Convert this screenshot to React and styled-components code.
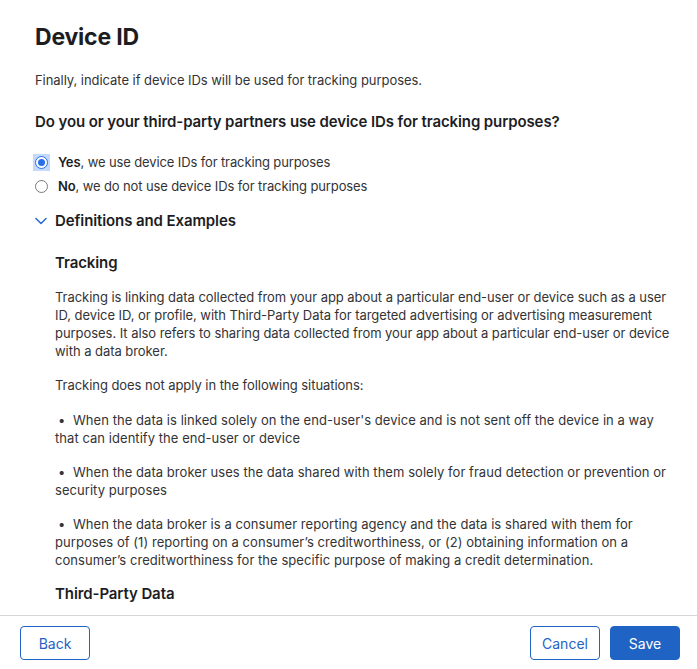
import React, { useState } from "react";
import styled, { createGlobalStyle } from "styled-components";

const GlobalStyle = createGlobalStyle`
  html, body {
    margin: 0;
    padding: 0;
    background: #ffffff;
  }
  body {
    font-family: Inter, "Noto Sans", "Liberation Sans", sans-serif;
    color: #1d1d1f;
    -webkit-font-smoothing: antialiased;
  }
`;

const Page = styled.div`
  height: 669px;
  display: flex;
  flex-direction: column;
  overflow: hidden;
`;

const Content = styled.div`
  flex: 1;
  overflow: hidden;
  padding: 22px 23px 0 35px;
`;

const Title = styled.h1`
  margin: 0;
  font-size: 23px;
  line-height: 30px;
  font-weight: 700;
  letter-spacing: -0.2px;
`;

const Text = styled.p`
  margin: ${(p) => p.$mt || 16}px 0 0 0;
  font-size: 13px;
  line-height: 18px;
  color: #333336;
  letter-spacing: -0.05px;
`;

// bullet paragraphs run a touch wider than body text in the original
const Item = styled(Text)`
  letter-spacing: 0.05px;
`;

const Heading = styled.h2`
  margin: ${(p) => p.$mt || 0}px 0 0 0;
  font-size: 15px;
  line-height: 20px;
  font-weight: 600;
  letter-spacing: -0.1px;
`;

const RadioGroup = styled.div`
  margin-top: 18px;
  display: flex;
  flex-direction: column;
`;

const RadioRow = styled.label`
  display: flex;
  align-items: center;
  height: 24px;
  gap: 8px;
  font-size: 13px;
  letter-spacing: -0.12px;
  color: #333336;
  cursor: pointer;
  b {
    font-weight: 600;
    color: #1d1d1f;
  }
`;

const RadioBox = styled.span`
  width: 17px;
  height: 17px;
  margin-left: -2px;
  display: flex;
  align-items: center;
  justify-content: center;
  background: ${(p) => (p.$checked ? "#c4d9fb" : "transparent")};
`;

const RadioCircle = styled.span`
  box-sizing: border-box;
  width: 13px;
  height: 13px;
  border-radius: 50%;
  border: ${(p) => (p.$checked ? "1.5px solid #2a6fe8" : "1px solid #7b7b7f")};
  background: #fff;
  display: flex;
  align-items: center;
  justify-content: center;
  &::after {
    content: "";
    width: 7px;
    height: 7px;
    border-radius: 50%;
    background: ${(p) => (p.$checked ? "#2a6fe8" : "transparent")};
  }
`;

const Toggle = styled.div`
  margin-top: 13px;
  display: flex;
  align-items: center;
  gap: 8px;
  height: 20px;
  cursor: pointer;
`;

const Definitions = styled.div`
  padding-left: 20px;
`;

const Bullet = styled.span`
  display: inline-block;
  width: 18px;
  padding-left: 3px;
  box-sizing: border-box;
`;

const Footer = styled.div`
  flex: none;
  height: 54px;
  border-top: 1px solid #d6d6da;
  box-sizing: border-box;
  display: flex;
  align-items: flex-start;
  padding: 10px 17px 0 20px;
  gap: 10px;
`;

const Spacer = styled.div`
  flex: 1;
`;

const Button = styled.button`
  width: 70px;
  height: 34px;
  border-radius: 4px;
  font-family: inherit;
  font-size: 14px;
  border: 1px solid #1f63c4;
  background: ${(p) => (p.$primary ? "#1f63c4" : "#ffffff")};
  color: ${(p) => (p.$primary ? "#ffffff" : "#1f63c4")};
  cursor: pointer;
`;

const Chevron = () => (
  <svg width="12" height="8" viewBox="0 0 12 8" fill="none">
    <path
      d="M1 1.5 L6 6.5 L11 1.5"
      stroke="#2a6fd6"
      strokeWidth="1.6"
      strokeLinecap="round"
      strokeLinejoin="round"
    />
  </svg>
);

const options = [
  { key: "yes", label: "Yes", rest: ", we use device IDs for tracking purposes" },
  { key: "no", label: "No", rest: ", we do not use device IDs for tracking purposes" },
];

export default function App() {
  const [value, setValue] = useState("yes");
  const [open, setOpen] = useState(true);

  return (
    <Page>
      <GlobalStyle />
      <Content>
        <Title>Device ID</Title>
        <Text $mt={19}>
          Finally, indicate if device IDs will be used for tracking purposes.
        </Text>
        <Heading $mt={23}>
          Do you or your third-party partners use device IDs for tracking purposes?
        </Heading>
        <RadioGroup>
          {options.map((o) => (
            <RadioRow key={o.key} onClick={() => setValue(o.key)}>
              <RadioBox $checked={value === o.key}>
                <RadioCircle $checked={value === o.key} />
              </RadioBox>
              <span>
                <b>{o.label}</b>
                {o.rest}
              </span>
            </RadioRow>
          ))}
        </RadioGroup>
        <Toggle onClick={() => setOpen(!open)}>
          <Chevron />
          <Heading>Definitions and Examples</Heading>
        </Toggle>
        {open && (
          <Definitions>
            <Heading $mt={22}>Tracking</Heading>
            <Text $mt={15}>
              Tracking is linking data collected from your app about a particular
              end-user or device such as a user ID, device ID, or profile, with
              Third-Party Data for targeted advertising or advertising measurement
              purposes. It also refers to sharing data collected from your app
              about a particular end-user or device with a data broker.
            </Text>
            <Text>Tracking does not apply in the following situations:</Text>
            <Item $mt={17}>
              <Bullet>•</Bullet>When the data is linked solely on the end-user's
              device and is not sent off the device in a way that can identify the
              end-user or device
            </Item>
            <Item>
              <Bullet>•</Bullet>When the data broker uses the data shared with them
              solely for fraud detection or prevention or security purposes
            </Item>
            <Item>
              <Bullet>•</Bullet>When the data broker is a consumer reporting agency
              and the data is shared with them for purposes of (1) reporting on a
              consumer’s creditworthiness, or (2) obtaining information on a
              consumer’s creditworthiness for the specific purpose of making a
              credit determination.
            </Item>
            <Heading $mt={15}>Third-Party Data</Heading>
            <Text>
              Third-Party Data is any data about a particular end-user or device
              collected from apps, websites, or offline properties not owned by you.
            </Text>
          </Definitions>
        )}
      </Content>
      <Footer>
        <Button>Back</Button>
        <Spacer />
        <Button>Cancel</Button>
        <Button $primary>Save</Button>
      </Footer>
    </Page>
  );
}
